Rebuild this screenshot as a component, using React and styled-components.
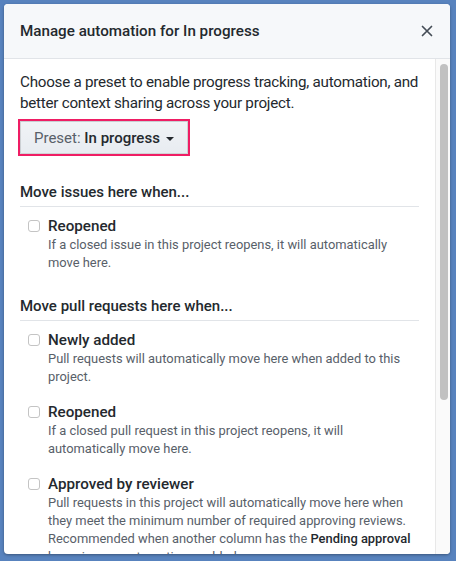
import styled, { createGlobalStyle } from "styled-components"

const GlobalStyle = createGlobalStyle`
  html, body {
    margin: 0;
    padding: 0;
    height: 100%;
    background-color: #5883be;
    font-family: Roboto, "Liberation Sans", Arial, sans-serif;
    color: #24292e;
  }
  #root {
    height: 100%;
  }
  * {
    box-sizing: border-box;
  }
`

const Page = styled.div`
  height: 100%;
  padding: 4px 6px 7px 4px;
`

const Dialog = styled.div`
  display: flex;
  flex-direction: column;
  height: 100%;
  background-color: #fff;
  border-radius: 4px;
  overflow: hidden;
  box-shadow: 0 1px 3px rgba(0, 0, 0, 0.35);
`

const Header = styled.header`
  display: flex;
  align-items: center;
  justify-content: space-between;
  height: 55px;
  flex-shrink: 0;
  padding: 0 17px 0 16px;
  background-color: #f6f8fa;
  border-bottom: 1px solid #e1e4e8;
`

const Title = styled.h1`
  margin: 0;
  font-size: 15.2px;
  font-weight: 500;
  color: #24292e;
`

const CloseButton = styled.button`
  display: flex;
  border: none;
  background: transparent;
  padding: 0;
  color: #444d56;
  cursor: pointer;
`

const Body = styled.div`
  display: flex;
  flex: 1;
  min-height: 0;
`

const Content = styled.div`
  flex: 1;
  overflow: hidden;
  padding: 13px 16px 0 16px;
`

const ScrollTrack = styled.div`
  width: 15px;
  flex-shrink: 0;
  padding: 5px 3px 0 4px;
  background-color: #fafafa;
  border-left: 1px solid #e8e8e8;
`

const ScrollThumb = styled.div`
  width: 8px;
  border-radius: 4px;
  background-color: #c1c1c1;
`

const Intro = styled.p`
  margin: 0 0 7px;
  font-size: 15.2px;
  line-height: 21px;
  letter-spacing: -0.25px;
  color: #24292e;
`

const PresetButton = styled.button`
  display: flex;
  align-items: center;
  gap: 6px;
  height: 33px;
  margin-bottom: 28px;
  padding: 0 13px;
  font-family: inherit;
  font-size: 15px;
  color: #24292e;
  background-image: linear-gradient(-180deg, #f0f3f6 0%, #e8ecf1 100%);
  border: 1px solid rgba(27, 31, 35, 0.15);
  border-radius: 0;
  outline: 2px solid #ef1d64;
  cursor: pointer;
`

const Muted = styled.span`
  color: #586069;
`

const Strong = styled.span`
  font-weight: 500;
`

const Caret = styled.span`
  width: 0;
  height: 0;
  margin-top: 2px;
  border-left: 4px solid transparent;
  border-right: 4px solid transparent;
  border-top: 4px solid #24292e;
`

const Section = styled.section`
  margin-bottom: 24px;
`

const SectionTitle = styled.h2`
  margin: 0;
  padding-bottom: 4px;
  border-bottom: 1px solid #e1e4e8;
  font-size: 15px;
  line-height: 20px;
  font-weight: 500;
`

const Option = styled.label`
  display: grid;
  grid-template-columns: 12px 1fr;
  column-gap: 8px;
  padding-left: 8px;
  margin-top: 9px;

  & + & {
    margin-top: 16px;
  }
`

const Checkbox = styled.span`
  width: 12px;
  height: 12px;
  margin-top: 4px;
  border: 1px solid #c4c4c4;
  border-radius: 3px;
  background-color: #fff;
`

const OptionText = styled.div`
  display: flex;
  flex-direction: column;
`

const OptionLabel = styled.span`
  font-size: 15.2px;
  line-height: 20px;
  font-weight: 500;
  color: #24292e;
`

const OptionNote = styled.span`
  font-size: 12.9px;
  line-height: 18px;
  color: #586069;

  b {
    font-weight: 500;
    color: #24292e;
  }
`

const sections = [
  {
    title: "Move issues here when...",
    options: [
      {
        label: "Reopened",
        note: "If a closed issue in this project reopens, it will automatically move here.",
      },
    ],
  },
  {
    title: "Move pull requests here when...",
    options: [
      {
        label: "Newly added",
        note: "Pull requests will automatically move here when added to this project.",
      },
      {
        label: "Reopened",
        note: "If a closed pull request in this project reopens, it will automatically move here.",
      },
      {
        label: "Approved by reviewer",
        note: (
          <>
            Pull requests in this project will automatically move here when they
            meet the minimum number of required approving reviews. Recommended
            when another column has the <b>Pending approval</b> by reviewers
            automation enabled.
          </>
        ),
      },
    ],
  },
]

export default function App() {
  return (
    <>
      <GlobalStyle />
      <Page>
        <Dialog>
          <Header>
            <Title>Manage automation for In progress</Title>
            <CloseButton aria-label="Close">
              <svg width="12" height="12" viewBox="0 0 12 12">
                <path
                  d="M1.5 1.5l9 9M10.5 1.5l-9 9"
                  stroke="currentColor"
                  strokeWidth="1.7"
                  strokeLinecap="round"
                />
              </svg>
            </CloseButton>
          </Header>
          <Body>
            <Content>
              <Intro>
                Choose a preset to enable progress tracking, automation, and
                better context sharing across your project.
              </Intro>
              <PresetButton>
                <span>
                  <Muted>Preset: </Muted>
                  <Strong>In progress</Strong>
                </span>
                <Caret />
              </PresetButton>
              {sections.map((section) => (
                <Section key={section.title}>
                  <SectionTitle>{section.title}</SectionTitle>
                  {section.options.map((option) => (
                    <Option key={option.label}>
                      <Checkbox />
                      <OptionText>
                        <OptionLabel>{option.label}</OptionLabel>
                        <OptionNote>{option.note}</OptionNote>
                      </OptionText>
                    </Option>
                  ))}
                </Section>
              ))}
            </Content>
            <ScrollTrack>
              <ScrollThumb style={{ height: 336 }} />
            </ScrollTrack>
          </Body>
        </Dialog>
      </Page>
    </>
  )
}
